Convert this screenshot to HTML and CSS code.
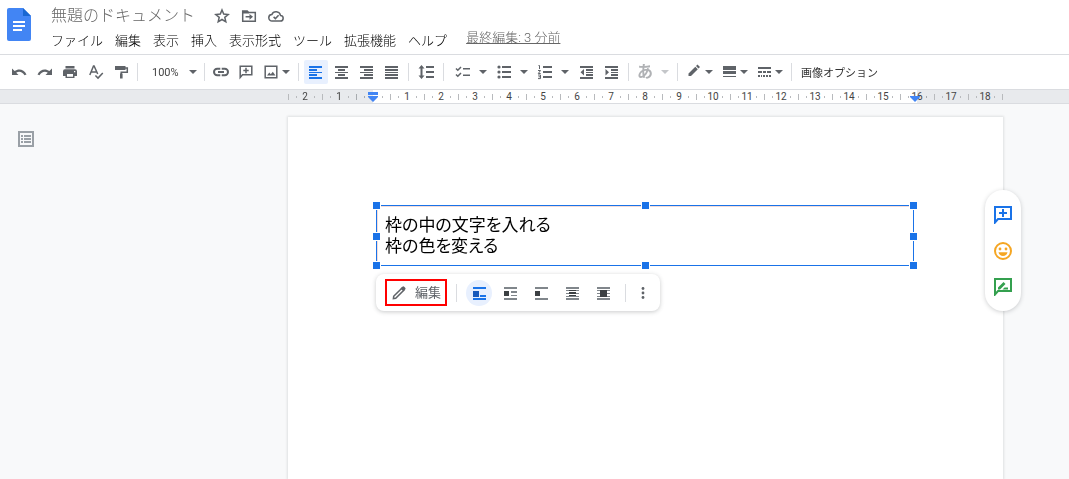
FILE: index.html
```html
<!DOCTYPE html>
<html lang="ja">
<head>
<meta charset="utf-8">
<meta name="viewport" content="width=device-width, initial-scale=1">
<title>無題のドキュメント</title>
<link rel="stylesheet" href="styles.css">
</head>
<body>
<header class="header">
  <svg class="logo" viewBox="0 0 24 33" aria-hidden="true">
    <path fill="#4285f4" d="M2 0h14l8 8v23a2 2 0 0 1-2 2H2a2 2 0 0 1-2-2V2a2 2 0 0 1 2-2z"/>
    <path fill="#1967d2" d="M16 0l8 8h-8z"/>
    <path fill="#fff" d="M6 13h12v2H6zm0 4h12v2H6zm0 4h9v2H6z"/>
  </svg>
  <div class="heading">
    <div class="title-row">
      <h1 class="title">無題のドキュメント</h1>
      <button class="plain" aria-label="スター"><svg class="icon" viewBox="0 0 16 16"><path class="line" d="M8 2l1.7 4.1 4.5.4-3.4 2.9 1 4.4L8 11.5l-3.8 2.3 1-4.4-3.4-2.9 4.5-.4z"/></svg></button>
      <button class="plain" aria-label="移動"><svg class="icon" viewBox="0 0 16 16"><path class="line" d="M1.7 3h4.5l1.5 1.6h6.6v8.7H1.7zM4.6 8.8h5"/><path d="M2 3h4l2 2.5H2zM8.5 5.9L12 8.8l-3.5 2.9z"/></svg></button>
      <button class="plain" aria-label="ドライブに保存しました"><svg class="icon" viewBox="0 0 16 16"><path class="line" d="M4.2 13h8a2.8 2.8 0 0 0 .3-5.6A4.6 4.6 0 0 0 3.8 6.6 3.2 3.2 0 0 0 4.2 13z"/><path class="line" d="M5.6 8.9l1.8 1.7 3.2-3.3"/></svg></button>
    </div>
    <nav class="menus">
      <button class="menu">ファイル</button>
      <button class="menu">編集</button>
      <button class="menu">表示</button>
      <button class="menu">挿入</button>
      <button class="menu">表示形式</button>
      <button class="menu">ツール</button>
      <button class="menu">拡張機能</button>
      <button class="menu">ヘルプ</button>
      <a class="history" href="#">最終編集: 3 分前</a>
    </nav>
  </div>
</header>

<div class="toolbar" role="toolbar">
  <div class="group history-group">
    <button class="tool" aria-label="元に戻す"><svg class="icon" viewBox="0 0 16 16"><path d="M1 4.500V11h6.500L5.200 8.700C7.800 6.700 11.500 7.500 13.500 11.300L15.500 10.500C13 5.200 7.500 4.300 3.600 7.100z"/></svg></button>
    <button class="tool" aria-label="やり直し"><svg class="icon flip" viewBox="0 0 16 16"><path d="M1 4.500V11h6.500L5.200 8.700C7.800 6.700 11.500 7.500 13.500 11.300L15.500 10.500C13 5.200 7.500 4.300 3.600 7.100z"/></svg></button>
    <button class="tool" aria-label="印刷"><svg class="icon" viewBox="0 0 16 16"><path fill-rule="evenodd" d="M3.500 2h9v2.500h-9zM3 5.300h10a2 2 0 0 1 2 2V12h-2.500v2h-9v-2H1V7.300a2 2 0 0 1 2-2zM5 10v2.700h6V10zM12 7v1.200h1.300V7z"/></svg></button>
    <button class="tool" aria-label="スペルチェック"><svg class="icon" viewBox="0 0 16 16"><path class="line" d="M1.800 11L5.500 2h.6l3.600 8M3.200 8h5M7.400 11.500l2.600 2.600 4.800-5.200"/></svg></button>
    <button class="tool" aria-label="書式を貼り付け"><svg class="icon" viewBox="0 0 16 16"><path d="M2 2h10.500v4H2z"/><path class="line" d="M12 4h2.300v4.200H8.200V10"/><path d="M7 9.500h2.600v5H7z"/></svg></button>
  </div>
  <span class="sep"></span>
  <div class="group zoom-group">
    <button class="zoom">100%<svg class="arrow" viewBox="0 0 8 4"><path d="M0 0h8L4 4z"/></svg></button>
  </div>
  <span class="sep"></span>
  <div class="group insert-group">
    <button class="tool" aria-label="リンク"><svg class="icon" viewBox="0 0 16 16"><path class="thick" d="M7.300 4.800H4.200a3.200 3.200 0 0 0 0 6.400h3.100M8.700 4.800h3.100a3.200 3.200 0 0 1 0 6.400H8.700M5 8h6"/></svg></button>
    <button class="tool" aria-label="コメント"><svg class="icon" viewBox="0 0 16 16"><path class="line" d="M2.200 2.200h11.600v8.600H4.500l-2.300 2.700zM8 3.800v5.400M5.300 6.500h5.400"/></svg></button>
    <button class="tool drop tight" aria-label="画像"><svg class="icon" viewBox="0 0 16 16"><path class="line" d="M2.200 2.200h11.600v11.600H2.200z"/><path d="M4 11.500l2.300-3 1.500 1.800 2-2.600 2.700 3.800z"/></svg><svg class="arrow" viewBox="0 0 8 4"><path d="M0 0h8L4 4z"/></svg></button>
  </div>
  <span class="sep"></span>
  <div class="group align-group">
    <button class="tool active" aria-label="左揃え" aria-pressed="true"><svg class="icon" viewBox="0 0 16 16"><path d="M1 2h13v2H1zm0 3h8v2H1zm0 3h13v1H1zm0 2h8v2H1zm0 3h13v2H1z"/></svg></button>
    <button class="tool" aria-label="中央揃え"><svg class="icon" viewBox="0 0 16 16"><path d="M2 2h13v2H2zm3 3h7v2H5zM2 8h13v1H2zm3 2h7v2H5zm-3 3h13v2H2z"/></svg></button>
    <button class="tool" aria-label="右揃え"><svg class="icon" viewBox="0 0 16 16"><path d="M2 2h13v2H2zm4 3h9v2H6zM2 8h13v1H2zm4 2h9v2H6zm-4 3h13v2H2z"/></svg></button>
    <button class="tool" aria-label="両端揃え"><svg class="icon" viewBox="0 0 16 16"><path d="M2 2h13v2H2zm0 3h13v2H2zm0 3h13v1H2zm0 2h13v2H2zm0 3h13v2H2z"/></svg></button>
  </div>
  <span class="sep"></span>
  <div class="group spacing-group">
    <button class="tool" aria-label="行間隔"><svg class="icon" viewBox="0 0 16 16"><path d="M3.500 1L6.500 4.500h-2v7h2l-3 3.500-3-3.500h2v-7h-2zM8 2h8v2H8zm0 5h8v2H8zm0 5h8v2H8z"/></svg></button>
  </div>
  <span class="sep"></span>
  <div class="group list-group">
    <button class="tool drop" aria-label="チェックリスト"><svg class="icon" viewBox="0 0 16 16"><path class="line" d="M1 4.500l1.800 1.800L6 3M1 10.500l1.800 1.800L6 9"/><path d="M8 4h7v1.500H8zm0 6.500h7V12H8z"/></svg><svg class="arrow" viewBox="0 0 8 4"><path d="M0 0h8L4 4z"/></svg></button>
    <button class="tool drop" aria-label="箇条書き"><svg class="icon" viewBox="0 0 16 16"><circle cx="3" cy="3" r="1.600"/><circle cx="3" cy="8" r="1.600"/><circle cx="3" cy="13" r="1.600"/><path d="M6 2h9v2H6zm0 5h9v2H6zm0 5h9v2H6z"/></svg><svg class="arrow" viewBox="0 0 8 4"><path d="M0 0h8L4 4z"/></svg></button>
    <button class="tool drop" aria-label="番号付きリスト"><svg class="icon" viewBox="0 0 16 16"><path class="fine" d="M1.500 1.500h1V5M1 6.500h2.500L1.300 9.500h2.400M1 11h2.500v3.600H1M1.500 12.800h2"/><path d="M6 2h9v2H6zm0 5h9v2H6zm0 5h9v2H6z"/></svg><svg class="arrow" viewBox="0 0 8 4"><path d="M0 0h8L4 4z"/></svg></button>
    <button class="tool" aria-label="インデント減"><svg class="icon" viewBox="0 0 16 16"><path d="M2 2h13v2H2zm6 3h7v2H8zm0 3h7v1H8zm0 2h7v2H8zm-6 3h13v2H2zM6 5v6.500L2.500 8.200z"/></svg></button>
    <button class="tool" aria-label="インデント増"><svg class="icon" viewBox="0 0 16 16"><path d="M2 2h13v2H2zm6 3h7v2H8zm0 3h7v1H8zm0 2h7v2H8zm-6 3h13v2H2zM2.500 5v6.500L6 8.200z"/></svg></button>
  </div>
  <span class="sep"></span>
  <div class="group input-group">
    <button class="tool drop muted" aria-label="入力ツール"><span class="kana">あ</span><svg class="arrow" viewBox="0 0 8 4"><path d="M0 0h8L4 4z"/></svg></button>
  </div>
  <span class="sep"></span>
  <div class="group border-group">
    <button class="tool drop tight pen" aria-label="枠線の色"><svg class="icon" viewBox="0 0 16 16"><path d="M2.500 9.500L9.300 2.700l2.500 2.500L5 12H2.500zM10 2l1.500-1.500 2.500 2.500-1.500 1.500z"/></svg><svg class="arrow" viewBox="0 0 8 4"><path d="M0 0h8L4 4z"/></svg></button>
    <button class="tool drop tight" aria-label="枠線の太さ"><svg class="icon" viewBox="0 0 16 16"><path d="M2 2h13v4H2zm0 5h13v3H2zm0 5h13v1H2z"/></svg><svg class="arrow" viewBox="0 0 8 4"><path d="M0 0h8L4 4z"/></svg></button>
    <button class="tool drop tight" aria-label="枠線の破線"><svg class="icon" viewBox="0 0 16 16"><path d="M2 3h13v2H2zm0 4h4v2H2zm5 0h3v2H7zm4 0h4v2h-4zM2 11h2v2H2zm3 0h1v2H5zm2 0h2v2H7zm3 0h2v2h-2zm3 0h2v2h-2z"/></svg><svg class="arrow" viewBox="0 0 8 4"><path d="M0 0h8L4 4z"/></svg></button>
  </div>
  <span class="sep"></span>
  <button class="options">画像オプション</button>
</div>

<div class="ruler">
  <div class="scale">
    <span class="unit out">2</span><span class="unit out">1</span><span class="unit origin"><svg class="marker" viewBox="0 0 10 10"><path d="M0 0h10v3H0zM0 4h10v1L5 10 0 5z"/></svg></span><span class="unit">1</span><span class="unit">2</span><span class="unit">3</span><span class="unit">4</span><span class="unit">5</span><span class="unit">6</span><span class="unit">7</span><span class="unit">8</span><span class="unit">9</span><span class="unit">10</span><span class="unit">11</span><span class="unit">12</span><span class="unit">13</span><span class="unit">14</span><span class="unit">15</span><span class="unit end">16<svg class="marker low" viewBox="0 0 10 10"><path d="M0 4h10v1L5 10 0 5z"/></svg></span><span class="unit out">17</span><span class="unit out">18</span><span class="unit edge"></span>
  </div>
</div>

<main class="workspace">
  <aside class="outline">
    <button class="plain" aria-label="概要を表示"><svg class="icon-lg" viewBox="0 0 18 18"><path class="thick" d="M2 2h14v14H2z"/><path d="M4 5h2v2H4zm3 0h7v2H7zM4 8h2v2H4zm3 0h7v2H7zM4 11h2v2H4zm3 0h7v2H7z"/></svg></button>
  </aside>
  <article class="page">
    <div class="drawing">
      <p class="text">枠の中の文字を入れる<br>枠の色を変える</p>
      <i class="handle top left"></i><i class="handle top center"></i><i class="handle top right"></i>
      <i class="handle middle left"></i><i class="handle middle right"></i>
      <i class="handle bottom left"></i><i class="handle bottom center"></i><i class="handle bottom right"></i>
    </div>
    <div class="bubble">
      <button class="edit"><svg class="icon" viewBox="0 0 16 16"><path class="line" d="M2.700 11.300L10.800 3.200l2 2-8.100 8.100-2.300.4z"/><path d="M9.500 3.500L11.700 1.500q.8-.5 1.500.2l1 1q.7.700.2 1.500L12.500 6.300z"/></svg>編集</button>
      <span class="bar"></span>
      <div class="wraps">
        <button class="wrap on" aria-label="行内" aria-pressed="true"><svg class="icon" viewBox="0 0 16 16"><path class="rule" d="M2 2h13v2H2zm0 11h13v2H2zm7-3h6v2H9z"/><path d="M2 6h6v6H2z"/></svg></button>
        <button class="wrap" aria-label="テキストを折り返す"><svg class="icon" viewBox="0 0 16 16"><path class="rule" d="M2 2h13v2H2zm0 11h13v2H2zm7-7h6v2H9zm0 4h6v1H9z"/><path d="M2 6h5v5H2z"/></svg></button>
        <button class="wrap" aria-label="テキストを改行"><svg class="icon" viewBox="0 0 16 16"><path class="rule" d="M2 2h13v2H2zm0 11h13v2H2z"/><path d="M2 6h5v5H2z"/></svg></button>
        <button class="wrap" aria-label="背面"><svg class="icon" viewBox="0 0 16 16"><path class="rule" d="M2 2h13v2H2zm0 3h13v1H2zm0 3h13v1H2zm0 3h13v1H2zm0 2h13v2H2z"/><path d="M5 5h7v1H5zm0 2h7v2H5zm0 3h7v1H5z"/></svg></button>
        <button class="wrap" aria-label="前面"><svg class="icon" viewBox="0 0 16 16"><path class="rule" d="M2 2h13v2H2zm0 3h13v1H2zm0 3h13v1H2zm0 3h13v1H2zm0 2h13v2H2z"/><path d="M5 5h7v7H5z"/></svg></button>
      </div>
      <span class="bar"></span>
      <button class="more" aria-label="その他"><svg class="icon" viewBox="0 0 16 16"><circle cx="8" cy="3.500" r="1.400"/><circle cx="8" cy="8" r="1.400"/><circle cx="8" cy="12.500" r="1.400"/></svg></button>
    </div>
    <div class="reactions">
      <button class="plain blue" aria-label="コメントを追加"><svg class="icon-lg" viewBox="0 0 18 18"><path class="thick" d="M1 1h16v12H4l-3 3.500zM9 3v8M5 7h8"/></svg></button>
      <button class="plain amber" aria-label="リアクションを追加"><svg class="icon-lg" viewBox="0 0 18 18"><circle class="thick" cx="9" cy="9" r="8"/><circle cx="6" cy="7" r="1.400"/><circle cx="12" cy="7" r="1.400"/><path d="M4.500 10.200h9q-1 3.800-4.500 3.800t-4.500-3.800z"/></svg></button>
      <button class="plain green" aria-label="編集を提案"><svg class="icon-lg" viewBox="0 0 18 18"><path class="thick" d="M1 1h16v12H4l-3 3.500z"/><path d="M4 9.500L9.500 4l2 2L6 11.500H4zM8.500 11.500l2-2H14v2z"/></svg></button>
    </div>
  </article>
</main>
</body>
</html>
```

FILE: styles.css
```css
* { box-sizing: border-box; }

body {
  margin: 0;
  min-height: 100vh;
  display: flex;
  flex-direction: column;
  background: #f8f9fa;
  color: #000;
  font-family: Roboto, "Noto Sans CJK JP", sans-serif;
  font-size: 13px;
}

button {
  display: flex;
  align-items: center;
  padding: 0;
  border: 0;
  background: none;
  color: inherit;
  font: inherit;
  white-space: nowrap;
}

svg { display: block; flex: none; fill: currentColor; }
.icon { width: 16px; height: 16px; }
.icon-lg { width: 18px; height: 18px; }
.arrow { width: 8px; height: 4px; fill: #5f6368; }
.flip { transform: scaleX(-1); }
.line, .thick, .fine { fill: none; stroke: currentColor; stroke-width: 1.5; }
.thick { stroke-width: 2; }
.fine { stroke-width: 1; }

/* Header */
.header {
  display: flex;
  gap: 20px;
  height: 54px;
  padding: 0 7px;
  background: #fff;
}
.logo { width: 24px; height: 33px; margin-top: 8px; }
.title-row {
  display: flex;
  align-items: center;
  gap: 11px;
  height: 31px;
  color: #5f6368;
}
.title {
  margin: 0 8px 0 0;
  color: #666;
  font-size: 16px;
  font-weight: 300;
  line-height: 31px;
}
.menus { display: flex; align-items: center; gap: 12px; height: 20px; }
.menu { line-height: 20px; font-weight: 300; }
.history {
  margin: 0 0 6px 7px;
  color: #666;
  font-weight: 300;
  line-height: 16px;
}

/* Toolbar */
.toolbar {
  display: flex;
  align-items: center;
  height: 35px;
  padding-left: 7px;
  border-top: 1px solid #dadce0;
  background: #fff;
  color: #5f6368;
}
.group { display: flex; align-items: center; flex: none; gap: 1px; }
.sep { flex: none; width: 1px; height: 18px; background: #dadce0; }
.tool {
  justify-content: center;
  min-width: 24px;
  height: 24px;
  border-radius: 2px;
}
.drop { gap: 8px; padding: 0 4px; }
.tight { gap: 3px; }
.active { background: #e8f0fe; color: #1a73e8; }
.muted { color: #b0b2b5; }
.muted .arrow { fill: #c4c6c9; }
.kana { width: 16px; font-size: 16px; font-weight: 700; line-height: 24px; }
.history-group { width: 130px; padding-right: 4px; justify-content: space-between; }
.zoom-group { width: 66px; padding: 0 7px 0 14px; }
.zoom { flex: 1; justify-content: space-between; font-size: 11px; color: #444; }
.insert-group { width: 93px; padding-left: 4px; }
.align-group { width: 109px; padding-left: 5px; }
.spacing-group { width: 34px; padding-left: 5px; }
.list-group { width: 184px; padding-left: 7px; }
.input-group { width: 48px; padding-left: 4px; }
.border-group { width: 113px; padding-left: 4px; gap: 0; }
.options { margin-left: 9px; color: #333; font-size: 11px; }

/* Ruler */
.ruler {
  height: 15px;
  padding-left: 222px;
  border: solid #dadce0;
  border-width: 1px 0;
  background: #e8eaed;
}
.scale {
  display: grid;
  grid-template-columns: repeat(21, 34px) 1px;
  width: 715px;
  margin: 0 auto;
}
.unit {
  position: relative;
  height: 13px;
  background:
    linear-gradient(#b8babd, #b8babd) 0 4px / 1px 6px no-repeat,
    linear-gradient(#b8babd, #b8babd) 8px 6px / 1px 2px no-repeat,
    linear-gradient(#b8babd, #b8babd) 26px 6px / 1px 2px no-repeat,
    #fff;
  color: #444;
  font-size: 10px;
  line-height: 13px;
  text-align: center;
}
.out, .edge { background-color: #e8eaed; }
.origin::before, .end::before {
  content: "";
  position: absolute;
  inset: 0 50% 0 0;
  background: #e8eaed;
  mix-blend-mode: multiply;
}
.end::before { inset: 0 0 0 50%; }
.marker {
  position: absolute;
  top: 2px;
  left: 12px;
  width: 10px;
  height: 10px;
  fill: #4285f4;
}
.low { left: 10px; }

/* Workspace */
.workspace { flex: 1; display: flex; }
.outline { flex: none; width: 222px; padding: 26px 17px; color: #9aa0a6; }
.page {
  position: relative;
  width: 715px;
  margin: 13px auto 0;
  padding: 88px 89px 88px 88px;
  background: #fff;
  box-shadow: 0 0 2px 1px rgba(60, 64, 67, 0.12);
}
.drawing {
  position: relative;
  min-height: 61px;
  padding: 9px 8px 8px;
  border: 1px solid #1a73e8;
  box-shadow: inset 1px 1px #f4dcd8;
}
.text {
  margin: 0;
  font-size: 17px;
  font-feature-settings: "palt";
  line-height: 21px;
}
.handle {
  position: absolute;
  width: 9px;
  height: 9px;
  border: 1px solid #fff;
  background: #1a73e8;
}
.top { top: -5px; }
.middle { top: calc(50% - 4px); }
.bottom { bottom: -5px; }
.left { left: -5px; }
.center { left: calc(50% - 4px); }
.right { right: -5px; }

.bubble {
  display: flex;
  align-items: center;
  width: max-content;
  height: 37px;
  margin-top: 8px;
  padding: 0 9px;
  border-radius: 8px;
  background: #fff;
  box-shadow: 0 1px 4px rgba(60, 64, 67, 0.28);
  color: #5f6368;
}
.edit {
  gap: 8px;
  width: 62px;
  height: 27px;
  padding-left: 4px;
  border: 2px solid #f00;
  line-height: 20px;
}
.bar { width: 1px; height: 18px; margin: 0 9px; background: #dadce0; }
.wraps { display: flex; gap: 5px; }
.wrap {
  justify-content: center;
  width: 26px;
  height: 26px;
  border-radius: 50%;
  color: #3c4043;
}
.rule { fill: #80868b; }
.on { background: #e8f0fe; color: #185abc; }
.on .rule { fill: #1a73e8; }

.reactions {
  position: absolute;
  top: 73px;
  right: -18px;
  display: flex;
  flex-direction: column;
  gap: 18px;
  padding: 16px 9px 15px;
  border-radius: 18px;
  background: #fff;
  box-shadow: 0 1px 4px rgba(60, 64, 67, 0.25);
}
.blue { color: #1a73e8; }
.amber { color: #f5a623; }
.green { color: #34a04f; }
```
